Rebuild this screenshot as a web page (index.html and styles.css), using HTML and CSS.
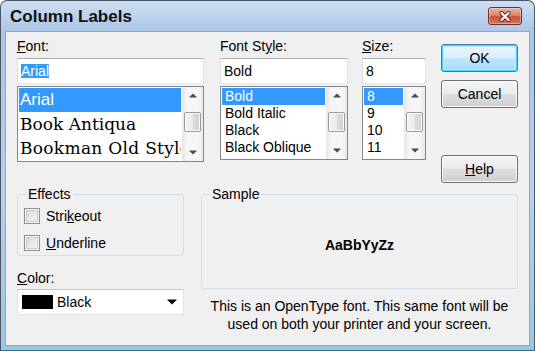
FILE: index.html
```html
<!DOCTYPE html>
<html lang="en">
<head>
    <meta charset="UTF-8">
    <meta name="viewport" content="width=device-width, initial-scale=1.0">
    <title>Column Labels</title>
    <link rel="stylesheet" href="styles.css">
</head>
<body>
    <div class="window">
        <div class="titlebar">
            <span class="title">Column Labels</span>
            <button class="close-btn" type="button" aria-label="Close">
                <svg width="14" height="11" viewBox="0 0 14 11">
                    <path d="M3.5 2 L10.5 9 M10.5 2 L3.5 9" stroke="#6a2219" stroke-width="4" stroke-linecap="round"/>
                    <path d="M3.5 2 L10.5 9 M10.5 2 L3.5 9" stroke="#fff" stroke-width="2.2" stroke-linecap="round"/>
                </svg>
            </button>
        </div>

        <div class="client">
            <div class="top-row">
                <div class="field font-col">
                    <div class="label"><u>F</u>ont:</div>
                    <div class="textbox"><span class="sel-text">Arial</span></div>
                    <div class="listbox font-list">
                        <ul class="items">
                            <li class="selected face-arial">Arial</li>
                            <li class="face-serif">Book Antiqua</li>
                            <li class="face-serif face-wide">Bookman Old Style</li>
                        </ul>
                        <div class="scrollbar">
                            <span class="arrow"><svg width="8" height="5" viewBox="0 0 8 5"><polygon points="0,4.5 4,0.5 8,4.5" fill="#4a4a4a"/></svg></span>
                            <span class="thumb"></span>
                            <span class="arrow arrow-down"><svg width="8" height="5" viewBox="0 0 8 5"><polygon points="0,0.5 8,0.5 4,4.5" fill="#4a4a4a"/></svg></span>
                        </div>
                    </div>
                </div>

                <div class="field style-col">
                    <div class="label">Font St<u>y</u>le:</div>
                    <div class="textbox">Bold</div>
                    <div class="listbox small-list">
                        <ul class="items">
                            <li class="selected">Bold</li>
                            <li>Bold Italic</li>
                            <li>Black</li>
                            <li>Black Oblique</li>
                        </ul>
                        <div class="scrollbar">
                            <span class="arrow"><svg width="8" height="5" viewBox="0 0 8 5"><polygon points="0,4.5 4,0.5 8,4.5" fill="#4a4a4a"/></svg></span>
                            <span class="thumb"></span>
                            <span class="arrow arrow-down"><svg width="8" height="5" viewBox="0 0 8 5"><polygon points="0,0.5 8,0.5 4,4.5" fill="#4a4a4a"/></svg></span>
                        </div>
                    </div>
                </div>

                <div class="field size-col">
                    <div class="label"><u>S</u>ize:</div>
                    <div class="textbox">8</div>
                    <div class="listbox small-list">
                        <ul class="items">
                            <li class="selected">8</li>
                            <li>9</li>
                            <li>10</li>
                            <li>11</li>
                        </ul>
                        <div class="scrollbar">
                            <span class="arrow"><svg width="8" height="5" viewBox="0 0 8 5"><polygon points="0,4.5 4,0.5 8,4.5" fill="#4a4a4a"/></svg></span>
                            <span class="thumb"></span>
                            <span class="arrow arrow-down"><svg width="8" height="5" viewBox="0 0 8 5"><polygon points="0,0.5 8,0.5 4,4.5" fill="#4a4a4a"/></svg></span>
                        </div>
                    </div>
                </div>

                <div class="btn-col">
                    <button class="btn btn-default" type="button">OK</button>
                    <button class="btn" type="button">Cancel</button>
                    <button class="btn btn-help" type="button"><u>H</u>elp</button>
                </div>
            </div>

            <div class="bottom-row">
                <div class="left-col">
                    <fieldset class="group effects">
                        <legend>Effects</legend>
                        <div class="check"><span class="box"></span><span>Stri<u>k</u>eout</span></div>
                        <div class="check"><span class="box"></span><span><u>U</u>nderline</span></div>
                    </fieldset>
                    <div class="label color-label"><u>C</u>olor:</div>
                    <div class="combo">
                        <span class="swatch"></span>
                        <span>Black</span>
                        <svg class="caret" width="10" height="6" viewBox="0 0 10 6"><polygon points="0,0.5 10,0.5 5,5.5" fill="#000"/></svg>
                    </div>
                </div>

                <div class="right-col">
                    <fieldset class="group sample">
                        <legend>Sample</legend>
                        <div class="sample-text">AaBbYyZz</div>
                    </fieldset>
                    <p class="note">This is an OpenType font. This same font will be used on both your printer and your screen.</p>
                </div>
            </div>
        </div>
    </div>
</body>
</html>
```

FILE: styles.css
```css
* {
    box-sizing: border-box;
}
body {
    margin: 0;
    font-family: 'Liberation Sans', Arial, sans-serif;
    font-size: 14px;
    color: #000;
    background: #fff;
}
.window {
    width: 535px;
    height: 351px;
    display: flex;
    flex-direction: column;
    border: 1px solid #4a5666;
    border-bottom-color: #2c6c8c;
    border-radius: 7px 7px 0 0;
    padding: 0 4px 4px 4px;
    background: linear-gradient(180deg, #cddef2 0%, #abc5e6 9%, #b9d0ea 55%, #9cc6de 100%);
}
.titlebar {
    height: 30px;
    display: flex;
    align-items: center;
    padding-left: 5px;
}
.title {
    font-size: 17px;
    font-weight: bold;
    color: #111;
    margin-top: 2px;
}
.close-btn {
    margin-left: auto;
    margin-right: 8px;
    width: 34px;
    height: 18px;
    padding: 0;
    display: flex;
    align-items: center;
    justify-content: center;
    border: 1px solid #6e3027;
    border-radius: 3px;
    background: linear-gradient(180deg, #eab0a3 0%, #dc8674 45%, #c9523c 55%, #d2735c 100%);
    box-shadow: inset 0 0 0 1px rgba(255,255,255,0.35);
}
.client {
    flex: 1;
    background: #f0f0f0;
    border: 1px solid #90a8c4;
    padding: 6px 0 0 11px;
    display: flex;
    flex-direction: column;
}
.top-row {
    display: flex;
    align-items: flex-start;
}
.label {
    height: 16px;
    line-height: 16px;
    margin-bottom: 4px;
    white-space: nowrap;
}
.font-col {
    width: 187px;
    margin-right: 16px;
}
.style-col {
    width: 128px;
    margin-right: 14px;
}
.size-col {
    width: 64px;
}
.textbox {
    height: 26px;
    background: #fff;
    border: 1px solid;
    border-color: #abadb3 #e2e3ea #e3e9ef #dbdfe6;
    padding-left: 3px;
    display: flex;
    align-items: center;
}
.sel-text {
    background: #3399ff;
    color: #fff;
    line-height: 14px;
}
.listbox {
    margin-top: 2px;
    display: flex;
    background: #fff;
    border: 1px solid #828790;
    height: 74px;
}
.font-list {
    height: 76px;
}
.items {
    flex: 1;
    min-width: 0;
    margin: 0;
    padding: 1px;
    list-style: none;
    overflow: hidden;
}
.items li {
    height: 17px;
    line-height: 17px;
    padding-left: 3px;
    white-space: nowrap;
    overflow: hidden;
}
.font-list .items li {
    height: 24px;
    line-height: 24px;
    padding-left: 1px;
    font-size: 17px;
}
.font-list .face-serif {
    font-family: 'DejaVu Serif', 'Liberation Serif', serif;
}
.font-list .face-wide {
    letter-spacing: 0.3px;
}
.items .selected {
    background: #3399ff;
    color: #fff;
}
.scrollbar {
    width: 21px;
    display: flex;
    flex-direction: column;
    background: linear-gradient(90deg, #e6e6e6, #f6f6f6 25%, #f6f6f6 75%, #e8e8e8);
}
.arrow {
    height: 17px;
    display: flex;
    align-items: center;
    justify-content: center;
}
.arrow-down {
    margin-top: auto;
}
.thumb {
    height: 20px;
    margin: 8px 2px 0;
    border: 1px solid #9a9a9a;
    border-radius: 2px;
    background: linear-gradient(90deg, #f4f4f4 0%, #e9e9e9 50%, #dcdcdc 51%, #d2d2d2 100%);
    box-shadow: inset 0 0 0 1px #fbfbfb;
}
.btn-col {
    display: flex;
    flex-direction: column;
    margin: 6px 0 0 15px;
}
.btn {
    width: 77px;
    height: 28px;
    padding: 0;
    font: inherit;
    color: #000;
    border: 1px solid #707070;
    border-radius: 3px;
    background: linear-gradient(180deg, #f3f3f3 0%, #ebebeb 48%, #dddddd 52%, #cfcfcf 100%);
    box-shadow: inset 0 0 0 1px #fbfbfb;
}
.btn + .btn {
    margin-top: 8px;
}
.btn-default {
    border-color: #3c7fb1;
    background: linear-gradient(180deg, #eaf6fd 0%, #d9f0fc 48%, #bee6fd 52%, #a7d9f5 100%);
    box-shadow: inset 0 0 0 1px #48d0f8, inset 0 0 0 2px #c4ecfb;
}
.btn-col .btn-help {
    margin-top: 47px;
}
.bottom-row {
    display: flex;
    margin-top: 3px;
}
.left-col {
    width: 167px;
}
.right-col {
    width: 317px;
    margin-left: 17px;
}
.group {
    margin: 0;
    min-width: 0;
    border: 1px solid #d5dfe5;
    border-radius: 3px;
    padding: 0 6px;
}
.group legend {
    padding: 0 2px;
    margin-left: 2px;
    line-height: 16px;
}
.effects {
    padding-top: 4px;
    padding-bottom: 2px;
}
.check {
    height: 20px;
    display: flex;
    align-items: center;
    gap: 6px;
}
.check + .check {
    margin-top: 7px;
}
.box {
    width: 16px;
    height: 16px;
    border: 1px solid #8e8f8f;
    background: linear-gradient(135deg, #d4d4d4 0%, #ececec 60%, #f8f8f8 100%);
    box-shadow: inset 0 0 0 1px #f7f7f7, inset 0 0 0 2px #c9c9c9;
}
.color-label {
    margin-top: 14px;
    margin-bottom: 3px;
}
.combo {
    height: 26px;
    background: #fff;
    border: 1px solid #dfe3e8;
    border-top-color: #c3c7cd;
    display: flex;
    align-items: center;
    padding: 0 6px 0 4px;
}
.swatch {
    width: 31px;
    height: 14px;
    background: #000;
    margin-right: 4px;
}
.caret {
    margin-left: auto;
}
.sample-text {
    height: 86px;
    display: flex;
    align-items: center;
    justify-content: center;
    font-weight: bold;
}
.note {
    margin: 8px 0 0;
    text-align: center;
    line-height: 18px;
}
```
